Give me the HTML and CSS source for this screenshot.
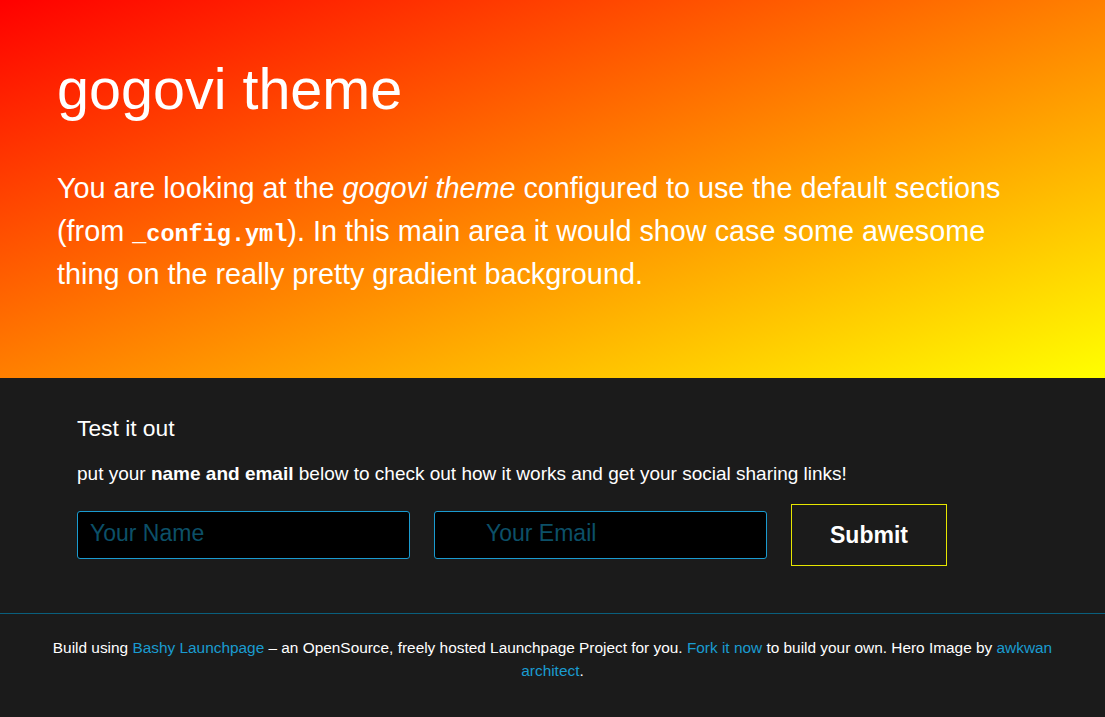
FILE: index.html
```html
<!DOCTYPE html>
<html>
<head>
<meta charset="utf-8">
<link rel="stylesheet" href="styles.css">
</head>
<body>
<header class="hero">
  <h1 class="hero-title">gogovi theme</h1>
  <p class="hero-text">You are looking at the <em>gogovi theme</em> configured to use the default sections (from <code>_config.yml</code>). In this main area it would show case some awesome thing on the really pretty gradient background.</p>
</header>
<section class="signup">
  <h2 class="signup-title">Test it out</h2>
  <p class="signup-text">put your <strong>name and email</strong> below to check out how it works and get your social sharing links!</p>
  <form class="signup-form">
    <input class="field field-name" type="text" placeholder="Your Name">
    <input class="field field-email" type="email" placeholder="Your Email">
    <button class="submit" type="button">Submit</button>
  </form>
</section>
<footer class="footer">
  <p class="footer-text">Build using <a href="#">Bashy Launchpage</a> – an OpenSource, freely hosted Launchpage Project for you. <a href="#">Fork it now</a> to build your own. Hero Image by <a href="#">awkwan architect</a>.</p>
</footer>
</body>
</html>
```
FILE: styles.css
```css
* { box-sizing: border-box; }
html, body { margin: 0; padding: 0; }
body {
  background: #1b1b1b;
  color: #fff;
  font-family: "Liberation Sans", Arial, Helvetica, sans-serif;
}
.hero {
  height: 378px;
  background: linear-gradient(to bottom right, #ff0000 0%, #ff8000 50%, #ffff00 100%);
  padding: 54px 57px 0;
}
.hero-title {
  margin: 0;
  font-weight: normal;
  font-size: 57.5px;
  line-height: 70px;
}
.hero-text {
  margin: 43px 0 0;
  font-size: 28.8px;
  line-height: 43px;
  max-width: 1000px;
}
.hero-text code {
  font-family: "Liberation Mono", "Courier New", monospace;
  font-size: 23.5px;
  font-weight: bold;
  line-height: 0;
}
.signup {
  padding: 34px 77px 0;
  height: 236px;
  border-bottom: 1px solid #0a5f7d;
}
.signup-title {
  margin: 0;
  font-weight: normal;
  font-size: 22.8px;
  line-height: 32px;
}
.signup-text {
  margin: 17px 0 0;
  font-size: 19px;
  line-height: 26px;
}
.signup-form {
  display: flex;
  align-items: center;
  gap: 24px;
  margin-top: 17px;
}
.field {
  width: 333px;
  height: 48px;
  background: #000;
  border: 1px solid #1a9bd0;
  border-radius: 3px;
  color: #fff;
  font-family: "Liberation Sans", Arial, sans-serif;
  font-size: 23px;
  padding: 0 12px 4px;
  outline: none;
}
.field-email { padding-left: 51px; }
.field::placeholder { color: #0c5068; }
.submit {
  width: 156px;
  height: 62px;
  background: transparent;
  border: 1px solid #e6e600;
  color: #fff;
  font-family: "Liberation Sans", Arial, sans-serif;
  font-weight: bold;
  font-size: 23px;
  padding: 0;
}
.footer {
  padding: 22px 50px 0;
}
.footer-text {
  margin: 0;
  text-align: center;
  font-size: 15.4px;
  line-height: 23px;
}
.footer-text a {
  color: #1a9bd0;
  text-decoration: none;
}
```
